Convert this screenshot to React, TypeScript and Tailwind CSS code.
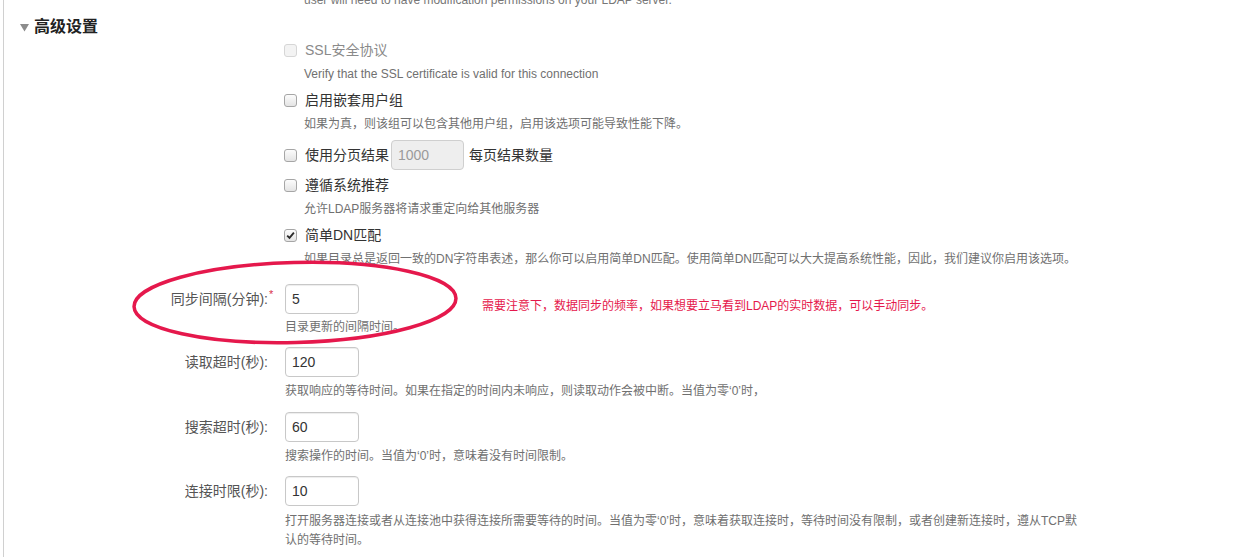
import React from "react";

function Box({ checked, disabled }: { checked?: boolean; disabled?: boolean }) {
  return (
    <span
      className={
        disabled
          ? "flex h-[13px] w-[13px] shrink-0 items-center justify-center rounded-[3px] border border-[#d6d6d6] bg-[#f3f3f3]"
          : "flex h-[13px] w-[13px] shrink-0 items-center justify-center rounded-[3px] border border-[#a6a6a6] bg-gradient-to-b from-[#fcfcfc] to-[#e4e4e4]"
      }
    >
      {checked && (
        <svg width="9" height="9" viewBox="0 0 9 9">
          <path d="M1.2 4.6 L3.5 6.9 L7.9 1.6" fill="none" stroke="#2a2a2a" strokeWidth="1.8" />
        </svg>
      )}
    </span>
  );
}

function CheckRow({
  label,
  checked,
  disabled,
  h,
  mt,
  children,
}: {
  label: string;
  checked?: boolean;
  disabled?: boolean;
  h: string;
  mt?: string;
  children?: React.ReactNode;
}) {
  return (
    <div className={`flex items-center gap-[8px] pl-[280px] ${h} ${mt ?? ""}`}>
      <Box checked={checked} disabled={disabled} />
      <span className={disabled ? "text-[14px] text-[#8a8a8a]" : "text-[14px] text-[#333]"}>{label}</span>
      {children}
    </div>
  );
}

function FormRow({ label, value, required, mt }: { label: string; value: string; required?: boolean; mt: string }) {
  return (
    <div className={`flex h-[30px] items-center ${mt}`}>
      <div className="w-[264px] text-right text-[14px] text-[#555]">
        <span className="relative">
          {label}
          {required && <span className="absolute -top-[5px] left-full ml-[1px] text-[11px] text-[#d9314a]">*</span>}
        </span>
      </div>
      <div className="w-[17px]" />
      <div className="flex h-[30px] w-[74px] items-center rounded-[4px] border border-[#c8c8c8] px-[6px] text-[14px] text-[#333] shadow-[inset_0_1px_1px_rgba(0,0,0,0.075)]">
        {value}
      </div>
    </div>
  );
}

export default function App() {
  return (
    <div className="relative flex h-[557px] w-[1249px] overflow-hidden bg-white font-['Liberation_Sans','Noto_Sans_CJK_SC',sans-serif]">
      <div className="w-[3px]" />
      <div className="w-[1px] bg-[#d0d0d0]" />
      <div className="flex flex-1 flex-col">
        <div className="-mt-[9px] h-[18px] whitespace-nowrap pl-[300px] text-[12px] leading-[18px] text-[#777]">
          user will need to have modification permissions on your LDAP server.
        </div>
        <div className="mt-[6px] flex h-[24px] items-center pl-[16px]">
          <svg width="9" height="8" viewBox="0 0 9 8" className="mt-[1px]">
            <path d="M0 0 H9 L4.5 7.5 Z" fill="#8c8c8c" />
          </svg>
          <span className="ml-[5px] text-[16px] font-bold text-[#222]">高级设置</span>
        </div>

        <CheckRow label="SSL安全协议" disabled h="h-[22px]" />
        <div className="mt-[1px] h-[24px] pl-[300px] text-[12px] leading-[24px] text-[#707070]">
          Verify that the SSL certificate is valid for this connection
        </div>

        <CheckRow label="启用嵌套用户组" h="h-[28px]" />
        <div className="h-[20px] pl-[300px] text-[12px] leading-[20px] text-[#707070]">
          如果为真，则该组可以包含其他用户组，启用该选项可能导致性能下降。
        </div>

        <CheckRow label="使用分页结果" h="h-[30px]" mt="mt-[6px]">
          <div className="-ml-[6px] flex h-[30px] w-[73px] items-center rounded-[4px] border border-[#cfcfcf] bg-[#eeeeee] px-[6px] text-[14px] text-[#9a9a9a]">
            1000
          </div>
          <span className="-ml-[3px] text-[14px] text-[#333]">每页结果数量</span>
        </CheckRow>

        <CheckRow label="遵循系统推荐" h="h-[30px]" />
        <div className="h-[18px] pl-[300px] text-[12px] leading-[18px] text-[#707070]">
          允许LDAP服务器将请求重定向给其他服务器
        </div>

        <CheckRow label="简单DN匹配" checked h="h-[34px]" />
        <div className="h-[14px] whitespace-nowrap pl-[300px] text-[12px] leading-[14px] text-[#707070]">
          如果目录总是返回一致的DN字符串表述，那么你可以启用简单DN匹配。使用简单DN匹配可以大大提高系统性能，因此，我们建议你启用该选项。
        </div>

        <FormRow label="同步间隔(分钟):" value="5" required mt="mt-[18px]" />
        <div className="h-[26px] pl-[281px] text-[12px] leading-[26px] text-[#707070]">目录更新的间隔时间。</div>

        <FormRow label="读取超时(秒):" value="120" mt="mt-[7px]" />
        <div className="h-[28px] pl-[281px] text-[12px] leading-[28px] text-[#707070]">
          获取响应的等待时间。如果在指定的时间内未响应，则读取动作会被中断。当值为零‘0’时，
        </div>

        <FormRow label="搜索超时(秒):" value="60" mt="mt-[7px]" />
        <div className="h-[28px] pl-[281px] text-[12px] leading-[28px] text-[#707070]">
          搜索操作的时间。当值为‘0’时，意味着没有时间限制。
        </div>

        <FormRow label="连接时限(秒):" value="10" mt="mt-[6px]" />
        <div className="mt-[6px] whitespace-nowrap pl-[281px] text-[12px] leading-[19px] text-[#707070]">
          打开服务器连接或者从连接池中获得连接所需要等待的时间。当值为零‘0’时，意味着获取连接时，等待时间没有限制，或者创建新连接时，遵从TCP默
          <br />
          认的等待时间。
        </div>
      </div>

      <svg className="pointer-events-none absolute left-[128px] top-[258px]" width="336" height="92" viewBox="0 0 336 92">
        <ellipse cx="167" cy="44.5" rx="161" ry="40" fill="none" stroke="#e5184c" strokeWidth="3.5" transform="rotate(-1.5 167 44.5)" />
      </svg>
      <div className="absolute left-[482px] top-[297px] whitespace-nowrap text-[12px] leading-[18px] text-[#e5184c]">
        需要注意下，数据同步的频率，如果想要立马看到LDAP的实时数据，可以手动同步。
      </div>
    </div>
  );
}
